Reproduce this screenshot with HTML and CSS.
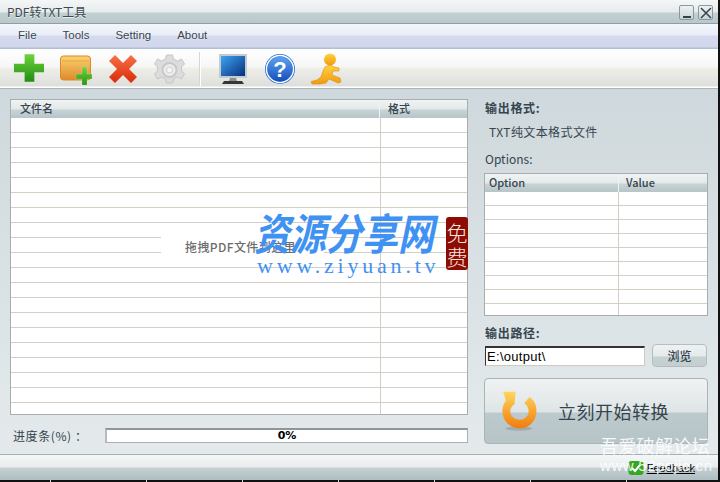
FILE: index.html
```html
<!DOCTYPE html>
<html lang="en">
<head>
    <meta charset="UTF-8">
    <meta name="viewport" content="width=device-width, initial-scale=1.0">
    <title>PDF转TXT工具</title>
    <link rel="stylesheet" href="styles.css">
</head>
<body>

    <div class="window">
        <div class="titlebar">
            <span class="title">PDF转TXT工具</span>
            <div class="win-buttons">
                <button class="win-btn"><svg width="12" height="12" viewBox="0 0 12 12"><path d="M2 10h8" stroke="#34424c" stroke-width="2"/></svg></button>
                <button class="win-btn"><svg width="12" height="12" viewBox="0 0 12 12"><path d="M1 1l10 10M11 1L1 11" stroke="#34424c" stroke-width="1.5"/></svg></button>
            </div>
        </div>

        <div class="menubar">
            <span class="menu-item">File</span>
            <span class="menu-item">Tools</span>
            <span class="menu-item">Setting</span>
            <span class="menu-item">About</span>
        </div>

        <div class="toolbar">
            <div class="tool-group">
                <!-- add -->
                <svg class="tool" viewBox="0 0 32 32">
                    <defs><linearGradient id="green" x1="0" y1="0" x2="0" y2="1"><stop offset="0" stop-color="#6fd23c"/><stop offset="1" stop-color="#1f8f12"/></linearGradient></defs>
                    <path d="M12 2h10v11h10v10H22v11H12V23H1V13h11z" fill="url(#green)" transform="translate(0 -.5) scale(.97 .86)"/>
                </svg>
                <!-- add folder -->
                <svg class="tool" viewBox="0 0 32 32">
                    <defs>
                        <linearGradient id="folder" x1="0" y1="0" x2="0" y2="1"><stop offset="0" stop-color="#fbd272"/><stop offset="1" stop-color="#de8a2a"/></linearGradient>
                        <linearGradient id="green2" x1="0" y1="0" x2="0" y2="1"><stop offset="0" stop-color="#72d540"/><stop offset="1" stop-color="#249614"/></linearGradient>
                    </defs>
                    <rect x="0.5" y="3" width="30" height="24" rx="3" fill="url(#folder)" stroke="#d88a2c"/>
                    <path d="M2 8h27" stroke="#e9a63f"/>
                    <path d="M22 15h5v7h5v5h-5v6h-5v-6h-6v-5h6z" fill="url(#green2)" stroke="#fff" stroke-opacity=".35" stroke-width=".5" transform="translate(0 -1)"/>
                </svg>
                <!-- remove -->
                <svg class="tool" viewBox="0 0 32 32">
                    <defs><linearGradient id="red" x1="0" y1="0" x2="0" y2="1"><stop offset="0" stop-color="#f9704a"/><stop offset="1" stop-color="#d92c07"/></linearGradient></defs>
                    <path d="M8 2l8 8 8-8 6 6-8 8 8 8-6 6-8-8-8 8-6-6 8-8-8-8z" fill="url(#red)"/>
                </svg>
                <!-- settings, disabled -->
                <svg class="tool" viewBox="1.5 0 32 32">
                    <g fill="#dcdcdc" stroke="#c6c6c6">
                        <path d="M14 2h6l1 4 4 2 4-2 3 5-3 3v4l3 3-3 5-4-2-4 2-1 4h-6l-1-4-4-2-4 2-3-5 3-3v-4l-3-3 3-5 4 2 4-2z"/>
                    </g>
                    <circle cx="17" cy="17" r="7" fill="#ececec" stroke="#c8c8c8" stroke-width="2"/>
                    <circle cx="17" cy="17" r="3" fill="#f6f6f6" stroke="#cfcfcf"/>
                </svg>
            </div>
            <div class="tool-sep"></div>
            <div class="tool-group">
                <!-- monitor -->
                <svg class="tool" viewBox="0 0 32 32">
                    <defs><linearGradient id="screen" x1="0" y1="0" x2="1" y2="1"><stop offset="0" stop-color="#3fa4f2"/><stop offset="1" stop-color="#06307c"/></linearGradient></defs>
                    <rect x="2" y="1" width="28" height="24" fill="#c4cbd0"/>
                    <rect x="4" y="3" width="24" height="20" fill="url(#screen)"/>
                    <path d="M13 25h6l1 3h-8z" fill="#8b8f92"/>
                    <path d="M7 28h18l2 3H5z" fill="#33373a"/>
                </svg>
                <!-- help -->
                <svg class="tool" viewBox="0 0 32 32">
                    <defs><linearGradient id="blue" x1="0" y1="0" x2="0" y2="1"><stop offset="0" stop-color="#5ea2ee"/><stop offset="1" stop-color="#1550bb"/></linearGradient></defs>
                    <circle cx="16" cy="16" r="15" fill="#2b6fd0"/>
                    <circle cx="16" cy="16" r="13.5" fill="none" stroke="#fff" stroke-width="1.4"/>
                    <circle cx="16" cy="16" r="12.4" fill="url(#blue)"/>
                    <text class="help-mark" x="16" y="24" text-anchor="middle">?</text>
                </svg>
                <!-- runner -->
                <svg class="tool" viewBox="0 0 32 32">
                    <defs><linearGradient id="runner" x1="0" y1="0" x2="0" y2="1"><stop offset="0" stop-color="#ffd23c"/><stop offset="1" stop-color="#f29a12"/></linearGradient></defs>
                    <circle cx="19" cy="6.500" r="6" fill="url(#runner)"/>
                    <path d="M14 14c3-2 7-2 9 0l5 1 0 3-6 0-1 4 8 3 1 4-3 1-9-4-3 4-6 1-8 0-1-2.500 6-1.500 4-3 2-6z" fill="url(#runner)" stroke="#e08a10" stroke-width=".6"/>
                </svg>
            </div>
        </div>

        <div class="content">
            <div class="left-col">
                <div class="grid file-grid">
                    <div class="grid-head">
                        <span class="col-name">文件名</span>
                        <span class="col-format">格式</span>
                    </div>
                    <div class="grid-body">
                        <div class="col-line"></div>
                        <div class="drop-hint">拖拽PDF文件到这里</div>
                    </div>
                </div>
                <div class="progress-row">
                    <span class="progress-label">进度条(%) ：</span>
                    <div class="progress-bar">0%</div>
                </div>
            </div>

            <div class="right-col">
                <div class="field-label format-label">输出格式:</div>
                <div class="format-value">TXT纯文本格式文件</div>
                <div class="options-label">Options:</div>
                <div class="grid options-grid">
                    <div class="grid-head">
                        <span class="col-option">Option</span>
                        <span class="col-value">Value</span>
                    </div>
                    <div class="grid-body">
                        <div class="col-line"></div>
                    </div>
                </div>
                <div class="field-label path-label">输出路径:</div>
                <div class="path-row">
                    <input class="path-input" type="text" value="E:\output\">
                    <button class="browse-btn">浏览</button>
                </div>
                <button class="start-btn">
                    <svg class="start-icon" width="38" height="42" viewBox="0 0 40 48">
                        <defs><linearGradient id="orange" x1="0" y1="0" x2="0" y2="1"><stop offset="0" stop-color="#ffd65a"/><stop offset="1" stop-color="#f07c10"/></linearGradient></defs>
                        <ellipse cx="20" cy="44" rx="15" ry="2.5" fill="#8d9a9c" opacity=".6"/>
                        <path d="M2 2h14l-1 14c-3 2-5 5-5 8 0 6 5 10 11 10s10-5 10-10c0-4-2-7-5-9l6-7c6 4 8 10 8 16 0 11-8 20-19 20S1 35 1 24c0-5 2-9 4-12z" fill="url(#orange)"/>
                    </svg>
                    <span>立刻开始转换</span>
                </button>
            </div>
        </div>

        <div class="statusbar">
            <svg width="16" height="16" viewBox="0 0 16 16">
                <rect x="0.5" y="1" width="15" height="14" rx="3" fill="#36a81f"/>
                <path d="M4 8l3 3 5-6" fill="none" stroke="#fff" stroke-width="2"/>
            </svg>
            <span class="feedback">Feedback</span>
        </div>

        <!-- watermarks stamped over the screenshot -->
        <div class="stamp">
            <div class="stamp-title">资源分享网</div>
            <div class="stamp-url">www.ziyuan.tv</div>
        </div>
        <div class="seal">免费</div>
        <div class="corner-mark">
            <div class="corner-cn">吾爱破解论坛</div>
            <div class="corner-url">www.52pojie.cn</div>
        </div>
    </div>

</body>
</html>
```

FILE: styles.css
```css
/* General reset */
* {
    margin: 0;
    padding: 0;
    box-sizing: border-box;
}

body {
    width: 720px;
    height: 482px;
    overflow: hidden;
    background: repeating-linear-gradient(90deg, #111 0, #111 95px, #ddd 95px, #ddd 96px) -45px 0;
    font-family: 'Noto Sans CJK SC', 'Liberation Sans', sans-serif;
    font-size: 12px;
    color: #36444e;
}

.window {
    position: relative;
    width: 718px;
    height: 480px;
    display: flex;
    flex-direction: column;
    overflow: hidden;
}

/* Title bar */
.titlebar {
    height: 24px;
    flex: none;
    display: flex;
    justify-content: space-between;
    padding: 0 5px 0 7px;
    background: linear-gradient(#f4f7f7 0, #e6ebec 12px, #c3d0d2 13px, #b9c8cb 23px, #8f9ea3 23px);
}

.title {
    line-height: 24px;
    font-size: 12px;
    color: #3d4a52;
    text-shadow: 0 1px 0 #e8eeee;
}

.win-buttons {
    display: flex;
    gap: 4px;
    padding-top: 5px;
}

.win-btn {
    width: 15px;
    height: 15px;
    display: flex;
    align-items: center;
    justify-content: center;
    border: 1px solid #8a989f;
    border-radius: 2px;
    background: linear-gradient(#eef2f3, #c9d4d7);
}

/* Menu */
.menubar {
    height: 25px;
    flex: none;
    display: flex;
    padding-left: 18px;
    gap: 26px;
    background: linear-gradient(#f4f6fc 0, #e9edf8 11px, #d4d9ee 12px, #d2d7ec 23px, #aebfd6 24px);
}

.menu-item {
    line-height: 22px;
    font-family: 'Liberation Sans', sans-serif;
    font-size: 11.5px;
    color: #36444e;
    text-shadow: 0 0 2px #fff;
}

/* Toolbar */
.toolbar {
    height: 39px;
    flex: none;
    display: flex;
    align-items: center;
    padding-left: 13px;
    background: linear-gradient(#fff 0, #f6f6f6 18px, #efefea 19px, #dededa 37px, #fff 38px);
}

.tool-group {
    display: flex;
    gap: 15px;
}

.tool {
    width: 32px;
    height: 32px;
}

.help-mark {
    font-family: 'Liberation Sans', sans-serif;
    font-weight: 700;
    font-size: 22px;
    fill: #fff;
}

.tool-sep {
    width: 2px;
    height: 34px;
    margin: 0 16px 0 13px;
    background: linear-gradient(90deg, #d6d6d2 50%, #fff 50%);
}

/* Main area */
.content {
    flex: 1;
    display: flex;
    padding: 10px 10px 0;
    border-top: 1px solid #a9b6ba;
    background: linear-gradient(#cfd8dc, #e4eaec);
}

.left-col {
    width: 458px;
    margin-right: 16px;
}

.right-col {
    width: 224px;
}

.grid {
    display: flex;
    flex-direction: column;
    border: 1px solid #a6aeb0;
    background: #fff;
}

.file-grid {
    height: 316px;
}

.options-grid {
    height: 143px;
}

.grid-head {
    height: 18px;
    flex: none;
    display: flex;
    font-size: 11px;
    line-height: 17px;
    background: linear-gradient(#eff3f4 0, #e3e9ea 9px, #c8d3d5 10px, #b7c5c8 18px);
}

.col-name {
    width: 369px;
    padding-left: 9px;
    font-weight: 500;
    border-right: 1px solid #f0f2f2;
}

.col-format {
    padding-left: 8px;
    font-weight: 500;
}

.col-option {
    width: 134px;
    padding-left: 4px;
    font-weight: 500;
    border-right: 1px solid #f0f2f2;
}

.col-value {
    padding-left: 7px;
    font-weight: 500;
}

.grid-body {
    position: relative;
    flex: 1;
    background: repeating-linear-gradient(#fff 0, #fff 14px, #d4cfc6 14px, #d4cfc6 15px);
}

.options-grid .grid-body {
    background: repeating-linear-gradient(#fff 0, #fff 13px, #d4cfc6 13px, #d4cfc6 14px);
}

.col-line {
    height: 100%;
    width: 1px;
    background: #d4cfc6;
}

.file-grid .col-line {
    margin-left: 369px;
}

.options-grid .col-line {
    margin-left: 133px;
}

.drop-hint {
    position: absolute;
    left: 150px;
    top: 115px;
    width: 163px;
    height: 24px;
    line-height: 28px;
    padding-right: 4px;
    text-align: center;
    letter-spacing: .4px;
    white-space: nowrap;
    background: #fff;
    color: #6c6c6c;
    font-weight: 500;
    font-size: 12px;
}

/* Progress */
.progress-row {
    display: flex;
    align-items: center;
    margin-top: 12px;
}

.progress-label {
    width: 95px;
    padding-left: 3px;
    font-size: 12px;
    letter-spacing: .6px;
    white-space: nowrap;
}

.progress-bar {
    flex: 1;
    height: 15px;
    text-align: center;
    line-height: 11px;
    font-family: 'DejaVu Sans', sans-serif;
    font-size: 11px;
    font-weight: 700;
    color: #000;
    background: #fff;
    border: 1px solid #a9b0b2;
    border-top: 2px solid #8f9698;
    border-left: 2px solid #b5bbbd;
}

/* Right column */
.field-label {
    font-weight: 700;
    letter-spacing: .7px;
    font-size: 12px;
    line-height: 16px;
    margin-left: 1px;
}

.format-label {
    margin-top: 1px;
}

.format-value {
    margin: 8px 0 0 5px;
    line-height: 16px;
    letter-spacing: .4px;
}

.options-label {
    margin: 11px 0 0 1px;
    line-height: 16px;
    font-size: 12px;
}

.options-grid {
    margin-top: 6px;
}

.path-label {
    margin: 9px 0 0 1px;
}

.path-row {
    display: flex;
    align-items: center;
    gap: 7px;
    margin: 3px 0 0 1px;
}

.path-input {
    width: 160px;
    height: 20px;
    padding-left: 1px;
    font-family: 'Liberation Sans', sans-serif;
    font-size: 13px;
    letter-spacing: .3px;
    color: #000;
    background: #fff;
    border: 1px solid #cfcac0;
    border-top: 2px solid #333;
    border-left: 1px solid #333;
}

.browse-btn {
    width: 55px;
    height: 23px;
    font-family: inherit;
    font-size: 12px;
    font-weight: 500;
    color: #36444e;
    border: 1px solid #b4bec1;
    border-radius: 4px;
    background: linear-gradient(#eef2f3 0, #e4e9ea 11px, #c6d1d4 12px, #c2ced1 23px);
}

.start-btn {
    width: 224px;
    height: 66px;
    margin-top: 11px;
    display: flex;
    align-items: center;
    padding-left: 15px;
    gap: 20px;
    font-family: inherit;
    font-size: 18px;
    letter-spacing: .5px;
    color: #36444e;
    border: 1px solid #a9b4b7;
    border-radius: 4px;
    background: linear-gradient(#eff2f3 0, #dfe5e6 33px, #bccacd 34px, #b6c4c7 65px);
}

.start-icon {
    flex: none;
}

/* Status bar */
.statusbar {
    height: 26px;
    flex: none;
    display: flex;
    align-items: center;
    justify-content: flex-end;
    gap: 3px;
    padding: 0 23px 0 0;
    border-top: 1px solid #a4b1b5;
    background: linear-gradient(#f5f7f7 0, #e9eded 12px, #c5d1d3 13px, #aebdc1 25px);
}

.feedback {
    font-family: 'Liberation Sans', sans-serif;
    font-size: 11px;
    color: #000;
    text-decoration: underline;
}

/* Watermarks */
.stamp {
    position: absolute;
    left: 254px;
    top: 209px;
    color: #3f92f2;
}

.stamp-title {
    font-size: 36px;
    line-height: 44px;
    font-weight: 700;
    font-style: italic;
    white-space: nowrap;
    transform: scaleY(1.2);
}

.stamp-url {
    margin: 4px 0 0 3px;
    font-family: 'Liberation Serif', serif;
    font-size: 22px;
    line-height: 18px;
    letter-spacing: 3.8px;
    white-space: nowrap;
}

.seal {
    position: absolute;
    left: 446px;
    top: 217px;
    width: 22px;
    height: 53px;
    border-radius: 3px;
    padding-top: 3px;
    background: #8e0a05;
    color: #f4e6dc;
    font-size: 21px;
    font-weight: 300;
    line-height: 24px;
    text-align: center;
    overflow: hidden;
}

.corner-mark {
    position: absolute;
    left: 600px;
    top: 434px;
    color: rgba(255, 255, 255, .88);
    white-space: nowrap;
}

.corner-cn {
    font-size: 18px;
    line-height: 22px;
    letter-spacing: .3px;
}

.corner-url {
    font-family: 'Liberation Sans', sans-serif;
    font-size: 15px;
    line-height: 19px;
    letter-spacing: .6px;
}
```
